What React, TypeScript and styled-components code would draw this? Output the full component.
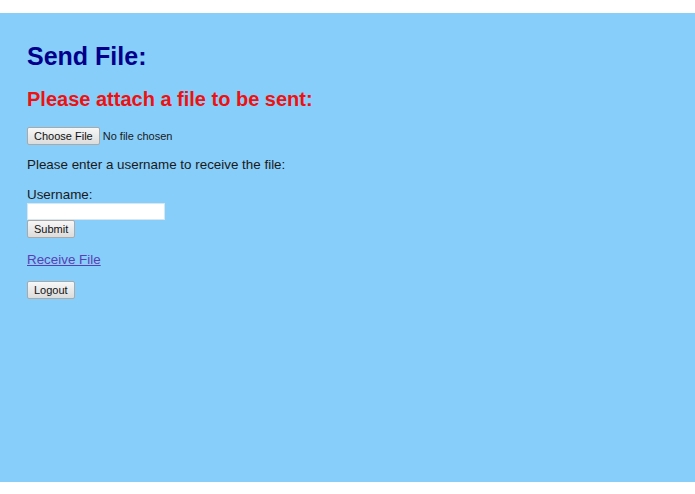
import styled, { createGlobalStyle } from 'styled-components';

const GlobalStyle = createGlobalStyle`
  html, body {
    margin: 0;
    padding: 0;
    background: #fff;
  }
  body {
    font-family: "Liberation Sans", Arial, sans-serif;
  }
`;

const Page = styled.div`
  margin-top: 13px;
  height: 469px;
  background-color: #87cefa;
  padding: 0 27px;
  display: flex;
  flex-direction: column;
  align-items: flex-start;
  color: #1a1a1a;
`;

const Title = styled.h1`
  margin: 29px 0 0;
  font-size: 25px;
  line-height: 29px;
  font-weight: bold;
  color: #00008b;
`;

const Subtitle = styled.h2`
  margin: 16px 0 0;
  font-size: 20px;
  line-height: 24px;
  font-weight: bold;
  color: #ee1111;
`;

const FileRow = styled.div`
  margin-top: 16px;
  display: flex;
  align-items: center;
  gap: 3px;
  font-size: 11px;
  line-height: 18px;
`;

const Button = styled.button<{ $mt?: number }>`
  margin: ${(p) => p.$mt ?? 0}px 0 0;
  height: 18px;
  padding: 0 6px;
  font-family: "Liberation Sans", Arial, sans-serif;
  font-size: 11px;
  color: #111;
  border: 1px solid #a9a9a9;
  border-radius: 2px;
  background: linear-gradient(#f7f7f7, #dcdcdc);
  cursor: pointer;
`;

const Text = styled.p<{ $mt: number }>`
  margin: ${(p) => p.$mt}px 0 0;
  font-size: 13.4px;
  line-height: 16px;
`;

const TextInput = styled.input`
  margin: 0;
  box-sizing: border-box;
  width: 138px;
  height: 17px;
  border: 1px solid #d8e6f0;
  background: #fff;
  padding: 0 2px;
`;

const Link = styled.a`
  margin-top: 13.4px;
  font-size: 13.4px;
  line-height: 16px;
  color: #5a3fb3;
  text-decoration: underline;
`;

export default function App() {
  return (
    <>
      <GlobalStyle />
      <Page>
        <Title>Send File:</Title>
        <Subtitle>Please attach a file to be sent:</Subtitle>
        <FileRow>
          <Button>Choose File</Button>
          <span>No file chosen</span>
        </FileRow>
        <Text $mt={12.4}>Please enter a username to receive the file:</Text>
        <Text $mt={14}>Username:</Text>
        <TextInput type="text" />
        <Button>Submit</Button>
        <Link href="#">Receive File</Link>
        <Button $mt={13}>Logout</Button>
      </Page>
    </>
  );
}
